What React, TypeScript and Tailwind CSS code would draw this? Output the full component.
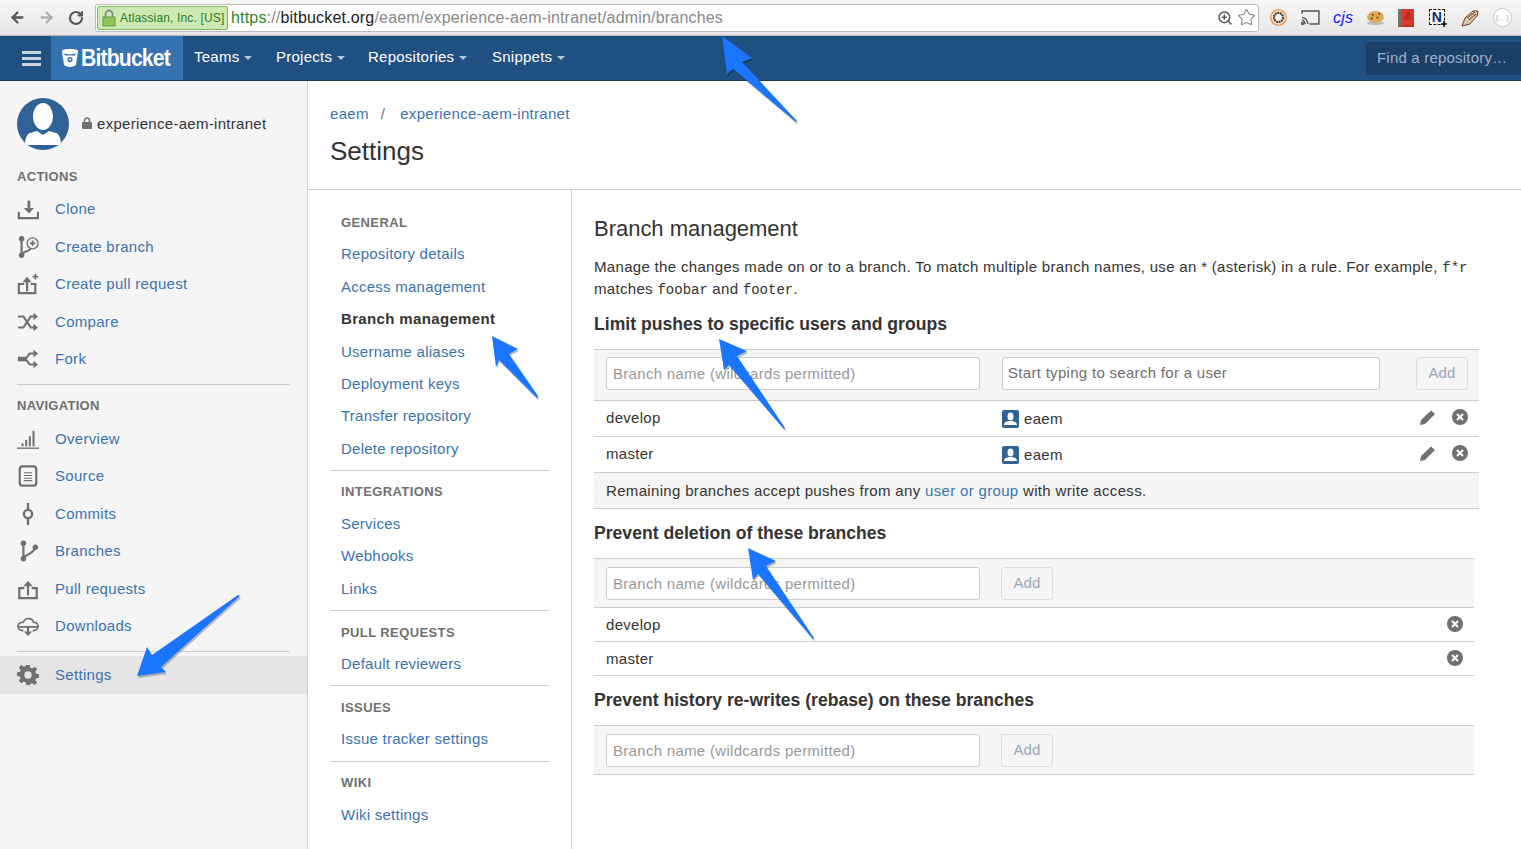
import { ArrowLeft, ArrowRight, RotateCw, Star, ZoomIn } from "lucide-react";
import type { ReactNode } from "react";

const LINK = "text-[#3b73af]";
const SIDE_ICON = "w-[22px] h-[22px] text-[#707070]";

const Ico = ({ children }: { children: ReactNode }) => (
  <svg viewBox="0 0 24 24" className={SIDE_ICON} fill="none" stroke="currentColor" strokeWidth="2">
    {children}
  </svg>
);

const icons: Record<string, ReactNode> = {
  clone: (
    <Ico>
      <path d="M2 15v7h21v-7" strokeWidth="2.400" />
      <path d="M13 3v10" strokeWidth="3" />
      <path d="M7.500 11h11L13 17z" fill="currentColor" stroke="none" />
    </Ico>
  ),
  createBranch: (
    <Ico>
      <circle cx="5" cy="3" r="3" fill="currentColor" stroke="none" />
      <circle cx="5" cy="21" r="3" fill="currentColor" stroke="none" />
      <path d="M5 3v18M5 21c0-4 6-3 10-7" strokeWidth="2.400" />
      <circle cx="17" cy="8" r="6" fill="#f5f5f5" strokeWidth="1.500" />
      <path d="M14 8h6M17 5v6" strokeWidth="1.800" />
    </Ico>
  ),
  createPr: (
    <Ico>
      <path d="M8 12H2v10h18V12h-5" strokeWidth="2.400" />
      <path d="M11 20V8" strokeWidth="2.400" />
      <path d="M6 10l5-6 5 6z" fill="currentColor" stroke="none" />
      <path d="M20 1v6M17 4h6" strokeWidth="2" />
    </Ico>
  ),
  compare: (
    <Ico>
      <path d="M1 6h6l8 12h4M1 18h6l8-12h4" strokeWidth="2.400" />
      <path d="M18 2l5 4-5 4zM18 14l5 4-5 4z" fill="currentColor" stroke="none" />
    </Ico>
  ),
  fork: (
    <Ico>
      <path d="M1 12h9" strokeWidth="5" />
      <path d="M9 12l5-6h5M9 12l5 6h5" strokeWidth="2.200" />
      <path d="M18 2l5 4-5 4zM18 14l5 4-5 4z" fill="currentColor" stroke="none" />
    </Ico>
  ),
  overview: (
    <Ico>
      <path d="M0 22h24" strokeWidth="1.500" />
      <path d="M6 20v-3M10 20v-7M14 20V9M18 20V3" strokeWidth="2.200" />
    </Ico>
  ),
  source: (
    <Ico>
      <rect x="3" y="1.500" width="18" height="21" rx="3" strokeWidth="2.400" />
      <path d="M7.500 8.500h9M7.500 11.500h9M7.500 14.500h9M7.500 17h9" strokeWidth="1.200" />
    </Ico>
  ),
  commits: (
    <Ico>
      <circle cx="12" cy="12" r="4.500" strokeWidth="2.600" />
      <path d="M12 0v7M12 17v7" strokeWidth="2.600" />
    </Ico>
  ),
  branches: (
    <Ico>
      <circle cx="7" cy="3.500" r="3" fill="currentColor" stroke="none" />
      <circle cx="7" cy="20.500" r="3" fill="currentColor" stroke="none" />
      <circle cx="20" cy="8" r="3" fill="currentColor" stroke="none" />
      <path d="M7 4v16M7 20.500c0-5 11-4 13-12.500" strokeWidth="2.400" />
    </Ico>
  ),
  pulls: (
    <Ico>
      <path d="M8 11H2.500v11h19V11H16" strokeWidth="2.400" />
      <path d="M12 19V7" strokeWidth="2.400" />
      <path d="M7 9l5-6 5 6z" fill="currentColor" stroke="none" />
    </Ico>
  ),
  downloads: (
    <Ico>
      <path d="M7 17H6a5 5 0 0 1-5-5 5 5 0 0 1 6-4c2-6 10-5 11 0a4.500 4.500 0 0 1 5 4 5 5 0 0 1-5 5h-1M1 13h22" strokeWidth="1.800" />
      <path d="M12 13v6" strokeWidth="2.400" />
      <path d="M7.500 18h9L12 23z" fill="currentColor" stroke="none" />
    </Ico>
  ),
  settings: (
    <svg viewBox="0 0 24 24" className={SIDE_ICON} fill="currentColor">
      <path
        fillRule="evenodd"
        d="M10 1h4l.6 3.200 2 .8L19.300 3l2.700 2.700-2 2.800.8 2 3.200.5v4l-3.200.6-.8 2 1.900 2.700-2.700 2.700-2.700-1.900-2 .8L14 23h-4l-.6-3.200-2-.8-2.700 1.900L2 18.200l1.900-2.700-.8-2L0 13V9l3.200-.5.8-2L2.100 3.700 4.800 1l2.700 2 2-.8zM12 8a4 4 0 1 0 0 8 4 4 0 0 0 0-8z"
      />
    </svg>
  ),
};

const SideItem = ({ icon, label, active }: { icon: string; label: string; active?: boolean }) => (
  <div className={`flex items-center px-[17px] ${active ? "bg-[#e5e5e5] h-[38px]" : "h-[37.500px]"}`}>
    <span className="w-[38px] flex items-center">{icons[icon]}</span>
    <span className={`${LINK}`}>{label}</span>
  </div>
);

const SideHeading = ({ children }: { children: ReactNode }) => (
  <div className="mx-[17px] text-[#707070] font-bold text-[13px] h-5 flex items-center tracking-[0.3px]">{children}</div>
);

const SubHeading = ({ children }: { children: ReactNode }) => (
  <div className="px-[11px] text-[#707070] font-bold text-[13px] h-[20px] flex items-center tracking-[0.4px]">{children}</div>
);

const SubItem = ({ children, active }: { children: ReactNode; active?: boolean }) => (
  <div className={`px-[11px] h-[32.400px] flex items-center tracking-[0.25px] ${active ? "font-bold tracking-[0.35px] text-[#333]" : LINK}`}>
    {children}
  </div>
);

const SubDivider = () => <div className="border-t border-[#ccc] mt-[5px] h-[12.400px]" />;

const TextBox = ({ placeholder, w, dark, low }: { placeholder: string; w: string; dark?: boolean; low?: boolean }) => (
  <div
    className={`${w} h-[33px] bg-white border border-[#ccc] rounded-[3px] flex items-center whitespace-nowrap ${
      dark ? "text-[#707070] pl-[5px]" : `text-[#999] pl-[6px] ${low ? "pt-[3px]" : "pt-[1px]"}`
    }`}
  >
    {placeholder}
  </div>
);

const AddBtn = () => (
  <div className="w-[52px] h-[33px] bg-[#f5f5f5] border border-[#ddd] rounded-[3px] flex items-center justify-center text-[#99a5b5] tracking-[0.1px]">
    Add
  </div>
);

const Pencil = () => (
  <svg viewBox="0 0 16 16" className="w-4 h-4 text-[#707070]" fill="currentColor">
    <path d="M11 1.500l4 3.500L5 15l-5 1 1-5z" />
  </svg>
);

const Remove = () => (
  <svg viewBox="0 0 16 16" className="w-4 h-4">
    <circle cx="8" cy="8" r="8" fill="#707070" />
    <path d="M5 5l6 6M11 5l-6 6" stroke="#fff" strokeWidth="2" />
  </svg>
);

const UserBadge = () => (
  <svg viewBox="0 0 17 18" className="w-[17px] h-[18px]">
    <rect width="17" height="18" rx="2" fill="#2f6398" />
    <ellipse cx="8.500" cy="6.500" rx="3" ry="4" fill="#fff" />
    <path d="M2 15c0-3 3-3.500 4.500-4h4c1.500.5 4.500 1 4.500 4z" fill="#fff" />
  </svg>
);

const Heading = ({ children, className }: { children: ReactNode; className: string }) => (
  <h3 className={`text-[17.600px] font-bold tracking-normal text-[#333] leading-6 ${className}`}>{children}</h3>
);

const PushRow = ({ name }: { name: string }) => (
  <div className="flex items-center h-9 border-t border-[#ccc] px-3 text-[#333]">
    <span className="w-[396px]">{name}</span>
    <UserBadge />
    <span className="ml-[5px] flex-1 pt-[2px]">eaem</span>
    <span className="mr-[16px] -mt-[3px]">
      <Pencil />
    </span>
    <span className="-mr-[1px] -mt-[3px]">
      <Remove />
    </span>
  </div>
);

const BranchRow = ({ name }: { name: string }) => (
  <div className="flex items-center justify-between h-[34px] border-t border-[#ccc] pl-3 pr-[11px] text-[#333]">
    <span className="pt-[1px]">{name}</span>
    <span className="-mt-[1px]">
      <Remove />
    </span>
  </div>
);

const BranchForm = () => (
  <div className="h-[49px] bg-[#f5f5f5] border-t border-[#ccc] flex items-center gap-[21px] px-3">
    <TextBox placeholder="Branch name (wildcards permitted)" w="w-[374px]" low />
    <AddBtn />
  </div>
);

const Arrows = () => {
  const arrows = [
    "722,36 752,58 742,62 797,121 796,122 733,69 727,74",
    "492,336 518,349 509,354 538,396 537,398 499,360 496,367",
    "719,339 747,351 737,356 785,428 784,429 729,365 724,370",
    "748,548 776,561 766,566 814,638 813,639 758,574 753,580",
    "137,676 147,647 152,655 238,595 240,596 161,667 166,672",
  ];
  return (
    <svg className="absolute left-0 top-0 pointer-events-none" width="1521" height="849">
      {arrows.map((p) => (
        <g key={p}>
          <polygon points={p} fill="#000" opacity="0.25" transform="translate(1 2)" />
          <polygon points={p} fill="#1a75ff" />
        </g>
      ))}
    </svg>
  );
};

const Extensions = () => (
  <div className="flex items-center">
    <svg viewBox="0 0 18 18" className="w-[17px] h-[17px] ml-[11px]">
      <circle cx="9" cy="9" r="8.200" fill="#fbe8d8" stroke="#f08a3c" strokeWidth="1.200" />
      <circle cx="9" cy="9" r="4.800" fill="#fff" stroke="#444" strokeWidth="2.400" strokeDasharray="2 .6" />
    </svg>
    <svg viewBox="0 0 20 16" className="w-[19px] h-[15px] ml-[14px]" fill="none" stroke="#555" strokeWidth="1.500">
      <path d="M1 4V1h18v14H9" />
      <path d="M1 8a6.500 6.500 0 0 1 6 7M1 11a3.500 3.500 0 0 1 3 4" />
      <circle cx="1.500" cy="14.500" r="1" fill="#555" />
    </svg>
    <span className="w-[19px] ml-[13px] text-[16px] italic text-[#1a1aff] leading-none tracking-[0.2px]">cjs</span>
    <svg viewBox="0 0 20 16" className="w-[19px] h-[15px] ml-[14px]">
      <ellipse cx="10" cy="14" rx="9" ry="2" fill="#bbb" />
      <ellipse cx="10" cy="7.500" rx="9" ry="6.500" fill="#d8aa55" />
      <circle cx="7" cy="5" r="1" fill="#5a3a18" />
      <circle cx="12" cy="8" r="1" fill="#5a3a18" />
      <circle cx="14" cy="4" r="1" fill="#5a3a18" />
      <circle cx="6" cy="9" r="1" fill="#5a3a18" />
    </svg>
    <span className="w-[16px] h-[18px] ml-[13px] bg-[#d9372c] border-l-[4px] border-l-[#707070] border-b-[2px] border-b-[#b83027] flex items-center justify-center text-[11px] font-bold text-[#a82a20] leading-none">
      A
    </span>
    <span className="relative w-[16px] h-[16px] ml-[15px] mr-[2px] mb-[2px] bg-white border border-dashed border-[#111] flex items-center justify-center text-[14px] font-bold text-[#0a2a7a] leading-none">
      N
      <svg viewBox="0 0 6 6" className="absolute -right-[3px] -bottom-[3px] w-[6px] h-[6px]">
        <path d="M3 0v6M0 3h6" stroke="#111" strokeWidth="1.600" />
      </svg>
    </span>
    <svg viewBox="0 0 18 18" className="w-[18px] h-[18px] ml-[14px]">
      <path d="M1 17l3-8 8-7 5 0-1 5-7 8z" fill="#d8c8a8" stroke="#6b3a2a" />
      <path d="M6 9l8-6M8 11l7-6" stroke="#6b3a2a" />
    </svg>
    <span className="w-[19px] h-[19px] ml-[14px] rounded-full border-[1.500px] border-[#c8c8c8] bg-white flex items-center justify-center text-[8px] text-[#aaa] leading-none">
      {"{...}"}
    </span>
  </div>
);

const ChromeBar = () => (
  <div className="h-9 bg-gradient-to-b from-[#f7f7f7] to-[#e6e6e6] border-b border-[#b5b5b5] flex items-center pl-[9px]">
    <ArrowLeft className="w-[17px] h-[17px] text-[#555]" strokeWidth={3.200} />
    <ArrowRight className="w-[17px] h-[17px] text-[#b0b0b0] ml-[12px]" strokeWidth={3.200} />
    <RotateCw className="w-[16px] h-[16px] text-[#555] ml-[13px]" strokeWidth={3.200} />
    <div className="ml-[11px] w-[1164px] h-[28px] bg-white border border-[#bbb] rounded-[3px] flex items-center px-[1px] text-[16px] tracking-[0.18px] shrink-0">
      <div className="h-[24px] w-[131px] bg-[#cdeab5] border border-[#7fb95e] rounded-[2px] flex items-center text-[#2d7a1f] text-[12px] pl-[4px] gap-[4px] whitespace-nowrap tracking-[0.15px]">
        <svg viewBox="0 0 14 18" className="w-[14px] h-[18px] shrink-0">
          <path d="M3.500 9V5a3.500 3.500 0 0 1 7 0v4" fill="none" stroke="#888" strokeWidth="1.800" />
          <rect x="1" y="8" width="12" height="9" fill="#8cc45a" stroke="#6a9a45" />
        </svg>
        Atlassian, Inc. [US]
      </div>
      <span className="ml-[3px] text-[#2a8a1e]">https</span>
      <span className="text-[#888]">://</span>
      <span className="text-[#222]">bitbucket.org</span>
      <span className="text-[#888]">/eaem/experience-aem-intranet/admin/branches</span>
      <span className="flex-1" />
      <ZoomIn className="w-[16px] h-[16px] text-[#555]" strokeWidth={2.200} />
      <Star className="w-[19px] h-[19px] text-[#888] ml-[4px] mr-[1px]" strokeWidth={1.400} />
    </div>
    <Extensions />
  </div>
);

const Caret = () => <span className="ml-[5px] w-0 h-0 border-x-[4px] border-x-transparent border-t-[4px] border-t-[#b8c8da] mt-[1px]" />;

const TopNav = () => (
  <div className="h-[45px] bg-[#205081] border-b border-[#1a3a5c] flex items-center text-white">
    <div className="w-[51px] pl-[22px] flex flex-col gap-[3px]">
      <span className="w-[19px] h-[3px] bg-[#c8d4e0]" />
      <span className="w-[19px] h-[3px] bg-[#c8d4e0]" />
      <span className="w-[19px] h-[3px] bg-[#c8d4e0]" />
    </div>
    <div className="w-[132px] h-full bg-[#3572b0] flex items-center pl-[11px]">
      <svg viewBox="0 0 16 18" className="w-[16px] h-[18px]">
        <path fillRule="evenodd" fill="#fff" d="M8 0c4 0 8 .5 8 2 0 1-1.500 10.500-2 13.500C13.500 17 10 18 8 18s-5.500-1-6-2.500C1.500 12.500 0 3 0 2 0 .5 4 0 8 0zM1.800 4c1 1 4 1.400 6.200 1.400S13 5 14.200 4L13 6.500H3zM8 8a2.600 2.600 0 1 0 0 5.200A2.600 2.600 0 0 0 8 8zm0 1.500a1.100 1.100 0 1 1 0 2.200 1.100 1.100 0 0 1 0-2.200z" />
      </svg>
      <span className="ml-[3px] text-[23px] font-bold tracking-[-0.9px] scale-x-[0.92] origin-left">Bitbucket</span>
    </div>
    <div className="flex items-center text-[15px] ml-[11px] tracking-[0.25px] pb-[1px]">
      <span className="flex items-center w-[82px]">Teams<Caret /></span>
      <span className="flex items-center w-[92px]">Projects<Caret /></span>
      <span className="flex items-center w-[124px]">Repositories<Caret /></span>
      <span className="flex items-center">Snippets<Caret /></span>
    </div>
    <div className="ml-auto w-[155px] h-[33px] bg-[#1c3f68] rounded-l-[3px] flex items-center pl-[11px] text-[#9db2c8] text-[15px] tracking-[0.2px] whitespace-nowrap">
      Find a repository…
    </div>
  </div>
);

const Sidebar = () => (
  <aside className="w-[308px] shrink-0 h-full bg-[#f5f5f5] border-r border-[#ccc]">
    <div className="h-[86px] pt-[17px] pl-[17px] flex">
      <svg viewBox="0 0 52 52" className="w-[52px] h-[52px]">
        <defs>
          <clipPath id="avatar">
            <circle cx="26" cy="26" r="26" />
          </clipPath>
        </defs>
        <g clipPath="url(#avatar)">
          <rect width="52" height="52" fill="#2f6398" />
          <ellipse cx="26" cy="18.500" rx="10" ry="13.500" fill="#fff" />
          <path d="M8 47c0-7 2-11 5-12l7-2 6 4 6-4 7 2c3 1 5 5 5 12z" fill="#fff" />
        </g>
      </svg>
      <div className="ml-[13px] mt-[16px] flex items-center h-[20px] text-[#333] whitespace-nowrap">
        <svg viewBox="0 0 10 12" className="w-[10px] h-[12px] mr-[5px] mb-[3px]">
          <path d="M2.500 6V3.500a2.500 2.500 0 0 1 5 0V6" fill="none" stroke="#707070" strokeWidth="1.500" />
          <rect y="5" width="10" height="7" rx="1" fill="#707070" />
        </svg>
        experience-aem-intranet
      </div>
    </div>
    <SideHeading>ACTIONS</SideHeading>
    <div className="pt-[3.700px]">
      <SideItem icon="clone" label="Clone" />
      <SideItem icon="createBranch" label="Create branch" />
      <SideItem icon="createPr" label="Create pull request" />
      <SideItem icon="compare" label="Compare" />
      <SideItem icon="fork" label="Fork" />
    </div>
    <div className="mx-[17px] mt-[5.500px] border-t border-[#ccc] h-[12.500px]" />
    <SideHeading>NAVIGATION</SideHeading>
    <div className="pt-[4px]">
      <SideItem icon="overview" label="Overview" />
      <SideItem icon="source" label="Source" />
      <SideItem icon="commits" label="Commits" />
      <SideItem icon="branches" label="Branches" />
      <SideItem icon="pulls" label="Pull requests" />
      <SideItem icon="downloads" label="Downloads" />
    </div>
    <div className="mx-[17px] mt-[6px] border-t border-[#ccc] h-[5px]" />
    <SideItem icon="settings" label="Settings" active />
  </aside>
);

const SubNav = () => (
  <nav className="w-[264px] shrink-0 h-full border-r border-[#ccc] px-[22px] pt-[23px]">
    <SubHeading>GENERAL</SubHeading>
    <div className="pt-[5.500px]">
      <SubItem>Repository details</SubItem>
      <SubItem>Access management</SubItem>
      <SubItem active>Branch management</SubItem>
      <SubItem>Username aliases</SubItem>
      <SubItem>Deployment keys</SubItem>
      <SubItem>Transfer repository</SubItem>
      <SubItem>Delete repository</SubItem>
    </div>
    <div className="border-t border-[#ccc] mt-[4.500px] h-[12.400px]" />
    <SubHeading>INTEGRATIONS</SubHeading>
    <div className="pt-[5.700px]">
      <SubItem>Services</SubItem>
      <SubItem>Webhooks</SubItem>
      <SubItem>Links</SubItem>
    </div>
    <SubDivider />
    <SubHeading>PULL REQUESTS</SubHeading>
    <div className="pt-[5.700px]">
      <SubItem>Default reviewers</SubItem>
    </div>
    <SubDivider />
    <SubHeading>ISSUES</SubHeading>
    <div className="pt-[5.500px]">
      <SubItem>Issue tracker settings</SubItem>
    </div>
    <SubDivider />
    <SubHeading>WIKI</SubHeading>
    <div className="pt-[5.500px]">
      <SubItem>Wiki settings</SubItem>
    </div>
  </nav>
);

const MONO = "font-['Liberation_Mono',monospace] text-[14px] tracking-normal leading-none";

const Content = () => (
  <section className="flex-1 pl-[22px] pr-[42px] pt-[24px] text-[#333]">
    <h2 className="text-[22px] leading-[30px] tracking-[-0.02px]">Branch management</h2>
    <p className="mt-[12px] leading-[22px] w-[885px] tracking-[0.32px]">
      Manage the changes made on or to a branch. To match multiple branch names, use an * (asterisk) in a rule. For example, <code className={MONO}>f*r</code>{" "}
      matches <code className={MONO}>foobar</code> and <code className={MONO}>footer</code>.
    </p>
    <Heading className="mt-[12px]">Limit pushes to specific users and groups</Heading>
    <div className="mt-[13px] w-[885px] border-b border-[#ccc]">
      <div className="h-[51px] bg-[#f5f5f5] border-t border-[#ccc] flex items-center px-3 pb-[3px]">
        <TextBox placeholder="Branch name (wildcards permitted)" w="w-[374px]" />
        <div className="ml-[22px]">
          <TextBox placeholder="Start typing to search for a user" w="w-[378px]" dark />
        </div>
        <div className="ml-auto -mr-px">
          <AddBtn />
        </div>
      </div>
      <PushRow name="develop" />
      <PushRow name="master" />
      <div className="h-9 bg-[#f5f5f5] border-t border-[#ccc] flex items-center px-3 pt-[1px] tracking-[0.33px]">
        <span>
          Remaining branches accept pushes from any <span className={LINK}>user or group</span> with write access.
        </span>
      </div>
    </div>
    <Heading className="mt-[12px]">Prevent deletion of these branches</Heading>
    <div className="mt-[13px] w-[880px] border-b border-[#ccc]">
      <BranchForm />
      <BranchRow name="develop" />
      <BranchRow name="master" />
    </div>
    <Heading className="mt-[12px]">Prevent history re-writes (rebase) on these branches</Heading>
    <div className="mt-[13px] w-[880px] border-b border-[#ccc]">
      <BranchForm />
    </div>
  </section>
);

export default function App() {
  return (
    <div className="relative w-[1521px] h-[849px] overflow-hidden bg-white text-[15px] tracking-[0.3px] font-['Liberation_Sans',Arial,sans-serif]">
      <ChromeBar />
      <TopNav />
      <div className="flex h-[768px]">
        <Sidebar />
        <main className="flex-1 flex flex-col min-w-0">
          <header className="h-[109px] shrink-0 border-b border-[#ccc] pl-[22px] pt-[24px]">
            <div className="flex leading-[18px]">
              <span className={LINK}>eaem</span>
              <span className="ml-[12px] mr-[15px] text-[#707070]">/</span>
              <span className={LINK}>experience-aem-intranet</span>
            </div>
            <h1 className="text-[26px] leading-[32px] mt-[12px] tracking-normal text-[#333]">Settings</h1>
          </header>
          <div className="flex flex-1 min-h-0">
            <SubNav />
            <Content />
          </div>
        </main>
      </div>
      <Arrows />
    </div>
  );
}
